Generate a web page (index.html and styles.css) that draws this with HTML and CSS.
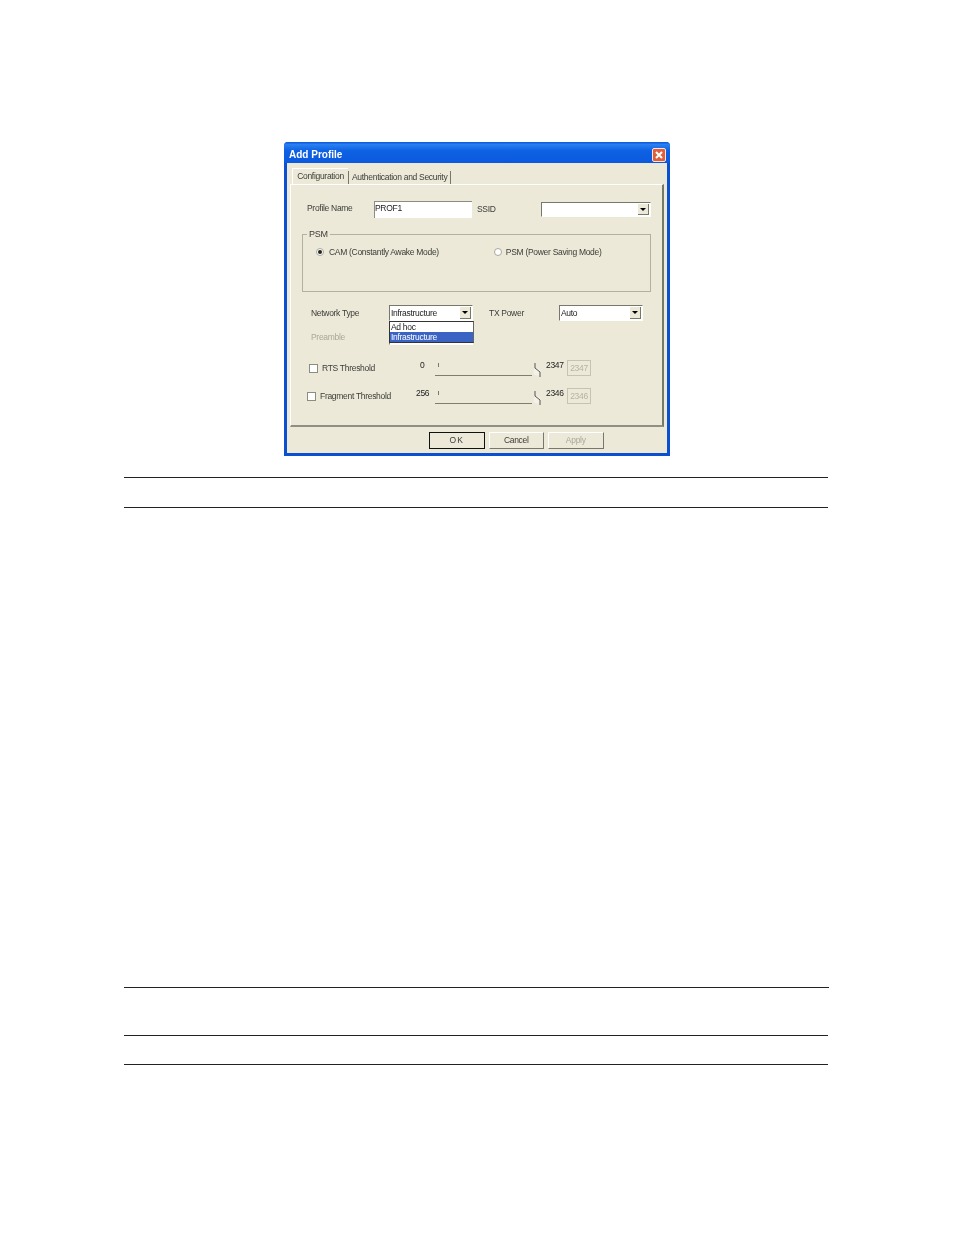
FILE: index.html
```html
<!DOCTYPE html>
<html lang="en">

<head>
    <meta charset="UTF-8">
    <title>Add Profile</title>
    <link rel="stylesheet" href="styles.css">
</head>

<body>
    <div class="dialog">
        <div class="titlebar">
            <span class="title">Add Profile</span>
            <span class="close">
                <svg width="12" height="12" viewBox="0 0 12 12">
                    <path d="M3 3L9 9M9 3L3 9" stroke="#fff" stroke-width="2" fill="none" />
                </svg>
            </span>
        </div>
        <div class="tabs">
            <div class="tab active">Configuration</div>
            <div class="tab">Authentication and Security</div>
        </div>
        <div class="panel">
            <div class="row row-profile">
                <span class="label label-profile">Profile Name</span>
                <div class="field field-profile">PROF1</div>
                <span class="label label-ssid">SSID</span>
                <div class="combo combo-ssid"><span class="combo-text"></span><span class="combo-btn"></span></div>
            </div>
            <fieldset class="psm">
                <legend>PSM</legend>
                <div class="psm-options">
                    <span class="radio checked"></span>
                    <span class="radio-label">CAM (Constantly Awake Mode)</span>
                    <span class="radio radio-second"></span>
                    <span class="radio-label">PSM (Power Saving Mode)</span>
                </div>
            </fieldset>
            <div class="row row-network">
                <span class="label label-network">Network Type</span>
                <div class="combo combo-network">
                    <span class="combo-text">Infrastructure</span><span class="combo-btn"></span>
                    <div class="dropdown">
                        <div class="dropdown-item">Ad hoc</div>
                        <div class="dropdown-item selected">Infrastructure</div>
                    </div>
                </div>
                <span class="label label-tx">TX Power</span>
                <div class="combo combo-tx"><span class="combo-text">Auto</span><span class="combo-btn"></span></div>
            </div>
            <div class="row row-preamble">
                <span class="label label-network disabled">Preamble</span>
                <div class="combo combo-network"><span class="combo-text"></span><span class="combo-btn"></span></div>
            </div>
            <div class="row row-threshold row-rts">
                <span class="checkbox"></span>
                <span class="label label-rts">RTS Threshold</span>
                <span class="range-min min-rts">0</span>
                <div class="slider">
                    <svg width="108" height="18" viewBox="0 0 108 18">
                        <path d="M3.5 3V7" stroke="#777" fill="none" />
                        <path d="M0 15.5H97" stroke="#7d7d70" fill="none" />
                        <circle cx="102" cy="12" r="3.5" fill="#f4f2e8" />
                        <path d="M100 3V8L105 12V17" stroke="#555" fill="none" />
                    </svg>
                </div>
                <span class="range-max">2347</span>
                <div class="value-box">2347</div>
            </div>
            <div class="row row-threshold row-frag">
                <span class="checkbox"></span>
                <span class="label label-frag">Fragment Threshold</span>
                <span class="range-min min-frag">256</span>
                <div class="slider">
                    <svg width="108" height="18" viewBox="0 0 108 18">
                        <path d="M3.5 3V7" stroke="#777" fill="none" />
                        <path d="M0 15.5H97" stroke="#7d7d70" fill="none" />
                        <circle cx="102" cy="12" r="3.5" fill="#f4f2e8" />
                        <path d="M100 3V8L105 12V17" stroke="#555" fill="none" />
                    </svg>
                </div>
                <span class="range-max">2346</span>
                <div class="value-box">2346</div>
            </div>
        </div>
        <div class="buttons">
            <div class="btn btn-default">OK</div>
            <div class="btn">Cancel</div>
            <div class="btn btn-disabled">Apply</div>
        </div>
    </div>

    <div class="rule rule-1"></div>
    <div class="rule rule-2"></div>
    <div class="rule rule-3"></div>
    <div class="rule rule-4"></div>
    <div class="rule rule-5"></div>
</body>

</html>
```

FILE: styles.css
```css
body {
    margin: 0;
    padding: 142px 0 0 0;
    background-color: #fff;
    font-family: "Liberation Sans", Arial, sans-serif;
    font-size: 8.5px;
    letter-spacing: -0.3px;
    color: #3c3c38;
}

.dialog {
    box-sizing: border-box;
    width: 386px;
    height: 314px;
    margin-left: 284px;
    border: 3px solid #0a50d0;
    border-top: none;
    border-radius: 4px 4px 0 0;
    background-color: #ece9d8;
    filter: blur(0.4px);
}

.titlebar {
    box-sizing: border-box;
    display: flex;
    align-items: center;
    justify-content: space-between;
    height: 21px;
    margin: 0 -3px;
    padding: 4px 4px 0 5px;
    border-radius: 4px 4px 0 0;
    background: linear-gradient(to bottom, #0a55d8 0%, #2a80f0 12%, #0f62e4 40%, #0a58de 100%);
}

.title {
    color: #fff;
    font-size: 10px;
    font-weight: bold;
    letter-spacing: 0;
}

.close {
    box-sizing: border-box;
    display: block;
    width: 14px;
    height: 14px;
    border: 1px solid #f3e6dc;
    border-radius: 2px;
    background-color: #e0603e;
}

.close svg {
    display: block;
}

.tabs {
    display: flex;
    align-items: flex-end;
    height: 21px;
    padding-left: 5px;
}

.tab {
    height: 13px;
    padding: 0 3px;
    line-height: 13px;
    border-left: 1px solid #77776c;
    border-right: 1px solid #77776c;
    white-space: nowrap;
}

.tab.active {
    box-sizing: border-box;
    width: 56px;
    height: 16px;
    padding: 0;
    line-height: 14px;
    text-align: center;
    border-top: 1px solid #fff;
    border-left: 1px solid #fff;
    border-right: none;
}

.panel {
    box-sizing: border-box;
    position: relative;
    width: 374px;
    height: 243px;
    margin-left: 3px;
    padding-top: 16px;
    border-top: 1px solid #fff;
    border-left: 1px solid #fff;
    border-right: 2px solid #77776c;
    border-bottom: 2px solid #8f8f84;
}

.row {
    display: flex;
    align-items: center;
}

.label {
    display: block;
    flex: none;
}

.row-profile {
    height: 17px;
    padding-left: 16px;
}

.label-profile {
    width: 67px;
    margin-top: -3px;
}

.field {
    box-sizing: border-box;
    background-color: #fff;
    border-top: 1px solid #8c8c80;
    border-left: 1px solid #8c8c80;
}

.field-profile {
    width: 98px;
    height: 17px;
    line-height: 13px;
    color: #222;
}

.label-ssid {
    width: 64px;
    margin-left: 5px;
    margin-top: -2px;
}

.combo {
    box-sizing: border-box;
    position: relative;
    display: flex;
    flex: none;
    height: 15px;
    background-color: #fff;
    border-top: 1px solid #77776c;
    border-left: 1px solid #77776c;
    border-right: 1px solid #fff;
    border-bottom: 1px solid #fff;
}

.combo-text {
    flex: 1;
    padding-left: 1px;
    line-height: 15px;
    color: #222;
}

.combo-btn {
    position: relative;
    width: 10px;
    margin: 1px 1px 1px 0;
    background-color: #ece9d8;
    border-right: 1px solid #77776c;
    border-bottom: 1px solid #77776c;
}

.combo-btn::after {
    content: "";
    position: absolute;
    left: 2px;
    top: 4px;
    border-style: solid;
    border-width: 3px 3px 0 3px;
    border-color: #000 transparent transparent transparent;
}

.combo-ssid {
    width: 110px;
}

.psm {
    box-sizing: border-box;
    width: 349px;
    height: 63px;
    margin: 11px 0 0 11px;
    padding: 0;
    border: 1px solid #b3b0a0;
}

.psm legend {
    margin-left: 4px;
    padding: 0 2px;
    font-size: 9px;
    line-height: 10px;
}

.psm-options {
    display: flex;
    align-items: center;
    padding: 8px 0 0 13px;
}

.radio {
    box-sizing: border-box;
    position: relative;
    flex: none;
    width: 8px;
    height: 8px;
    margin-right: 5px;
    border: 1px solid #a9a89c;
    border-radius: 50%;
    background-color: #fff;
}

.radio.checked::after {
    content: "";
    position: absolute;
    left: 1px;
    top: 1px;
    width: 4px;
    height: 4px;
    border-radius: 50%;
    background-color: #222;
}

.radio-second {
    margin-left: 55px;
    margin-right: 4px;
}

.radio-label {
    white-space: nowrap;
}

.row-network {
    height: 16px;
    margin-top: 13px;
}

.label-network {
    width: 78px;
    padding-left: 20px;
}

.combo-network {
    width: 84px;
    height: 16px;
}

.dropdown {
    box-sizing: border-box;
    position: absolute;
    z-index: 2;
    left: -1px;
    top: 15px;
    width: 85px;
    height: 22px;
    background-color: #fff;
    border: 1px solid #333;
    border-right-color: #666;
}

.dropdown-item {
    height: 10px;
    line-height: 10px;
    padding-left: 1px;
    color: #222;
}

.dropdown-item.selected {
    background-color: #3a63c4;
    color: #fff;
}

.label-tx {
    width: 70px;
    margin-left: 16px;
}

.combo-tx {
    width: 84px;
    height: 16px;
}

.row-preamble {
    height: 16px;
    margin-top: 8px;
}

.disabled {
    color: #aaa89a;
}

.row-threshold {
    height: 18px;
}

.row-rts {
    margin-top: 15px;
    padding-left: 18px;
}

.row-frag {
    margin-top: 10px;
    padding-left: 16px;
}

.checkbox {
    box-sizing: border-box;
    flex: none;
    width: 9px;
    height: 9px;
    margin-top: -2px;
    border: 1px solid #8c8c80;
    background-color: #fff;
}

.label-rts,
.label-frag {
    margin-left: 4px;
    margin-top: -2px;
}

.label-rts {
    width: 98px;
}

.label-frag {
    width: 96px;
}

.range-min {
    margin-top: -9px;
    flex: none;
    color: #222;
}

.min-rts {
    width: 15px;
}

.min-frag {
    width: 19px;
}

.slider {
    flex: none;
    width: 111px;
    height: 18px;
}

.slider svg {
    display: block;
}

.range-max {
    flex: none;
    width: 21px;
    margin-top: -9px;
    color: #222;
}

.value-box {
    box-sizing: border-box;
    width: 24px;
    height: 16px;
    margin-top: -2px;
    border: 1px solid #c6c3b2;
    line-height: 14px;
    text-align: center;
    color: #b5b3a5;
}

.buttons {
    display: flex;
    gap: 4px;
    padding: 5px 0 0 142px;
}

.btn {
    box-sizing: border-box;
    width: 55.5px;
    height: 17px;
    border-top: 1px solid #fff;
    border-left: 1px solid #fff;
    border-right: 1px solid #77776c;
    border-bottom: 1px solid #77776c;
    line-height: 15px;
    text-align: center;
}

.btn-default {
    border: 1px solid #111;
    letter-spacing: 1px;
}

.btn-disabled {
    color: #aaa89a;
}

.rule {
    width: 704px;
    margin-left: 124px;
    border-top: 1px solid #222;
}

.rule-1 {
    margin-top: 21px;
}

.rule-2 {
    margin-top: 29px;
}

.rule-3 {
    width: 705px;
    margin-top: 479px;
}

.rule-4 {
    margin-top: 47px;
}

.rule-5 {
    margin-top: 28px;
}
```
